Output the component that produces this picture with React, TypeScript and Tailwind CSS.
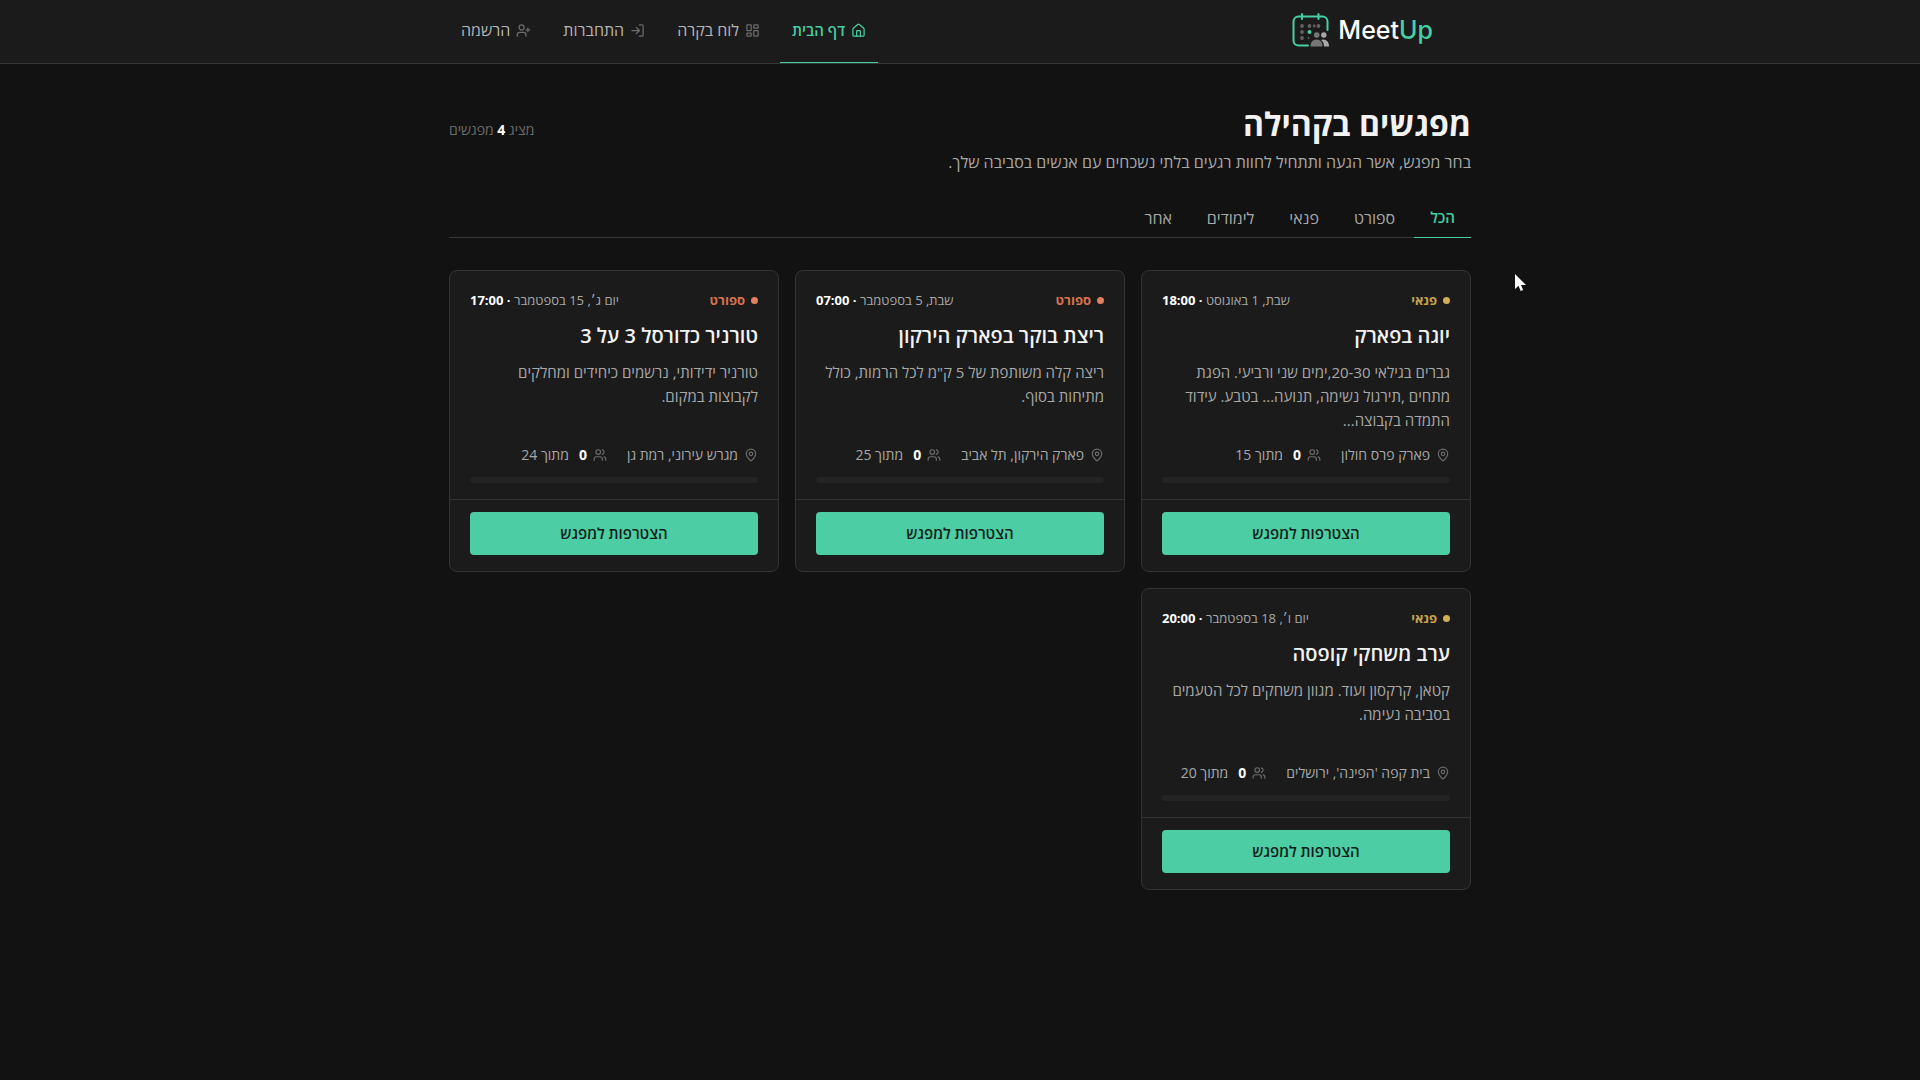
import { House, LayoutDashboard, LogIn, MapPin, UserPlus, Users } from "lucide-react";
import { clsx } from "clsx";

interface Meetup {
  id: number;
  category: "פנאי" | "ספורט";
  date: string;
  time: string;
  title: string;
  description: string;
  location: string;
  capacity: number;
  joined: number;
}

const meetups: Meetup[] = [
  {
    id: 1,
    category: "פנאי",
    date: "שבת, 1 באוגוסט",
    time: "18:00",
    title: "יוגה בפארק",
    description:
      "גברים בגילאי 20-30,ימים שני ורביעי. הפגת מתחים ,תירגול נשימה, תנועה... בטבע. עידוד התמדה בקבוצה...",
    location: "פארק פרס חולון",
    capacity: 15,
    joined: 0,
  },
  {
    id: 2,
    category: "ספורט",
    date: "שבת, 5 בספטמבר",
    time: "07:00",
    title: "ריצת בוקר בפארק הירקון",
    description: 'ריצה קלה משותפת של 5 ק"מ לכל הרמות, כולל מתיחות בסוף.',
    location: "פארק הירקון, תל אביב",
    capacity: 25,
    joined: 0,
  },
  {
    id: 3,
    category: "ספורט",
    date: "יום ג׳, 15 בספטמבר",
    time: "17:00",
    title: "טורניר כדורסל 3 על 3",
    description: "טורניר ידידותי, נרשמים כיחידים ומחלקים לקבוצות במקום.",
    location: "מגרש עירוני, רמת גן",
    capacity: 24,
    joined: 0,
  },
  {
    id: 4,
    category: "פנאי",
    date: "יום ו׳, 18 בספטמבר",
    time: "20:00",
    title: "ערב משחקי קופסה",
    description: "קטאן, קרקסון ועוד. מגוון משחקים לכל הטעמים בסביבה נעימה.",
    location: "בית קפה 'הפינה', ירושלים",
    capacity: 20,
    joined: 0,
  },
];

const navItems = [
  { label: "דף הבית", icon: House, active: true },
  { label: "לוח בקרה", icon: LayoutDashboard, active: false },
  { label: "התחברות", icon: LogIn, active: false },
  { label: "הרשמה", icon: UserPlus, active: false },
];

const filters = ["הכל", "ספורט", "פנאי", "לימודים", "אחר"];

function Logo() {
  return (
    <a href="#" dir="ltr" className="flex items-center gap-1.5">
      <svg viewBox="0 0 40 36" className="h-9 w-10" fill="none" aria-hidden="true">
        <path
          d="M16 33.5H6.500a5 5 0 0 1-5-5V9.500a5 5 0 0 1 5-5h24a5 5 0 0 1 5 5v8.500"
          stroke="#45cfa4"
          strokeWidth="2"
          strokeLinecap="round"
        />
        <path d="M10 2v5M26.500 2v5" stroke="#45cfa4" strokeWidth="2" strokeLinecap="round" />
        <g fill="#626262">
          <circle cx="10" cy="14" r="1.900" />
          <circle cx="17.500" cy="14" r="1.900" />
          <circle cx="22.200" cy="14" r="1.400" />
          <circle cx="26.500" cy="14" r="1.900" />
          <circle cx="10" cy="20" r="1.900" />
          <circle cx="10" cy="26" r="1.900" />
          <circle cx="16.500" cy="26" r="0.900" />
        </g>
        <circle cx="17.500" cy="20" r="2" fill="#45cfa4" />
        <circle cx="31.800" cy="23" r="2.700" fill="#a8a8a8" />
        <path d="M31 27.500c4 0 6 3 6 7h-5c0-3-1-5-3-6.500z" fill="#a8a8a8" />
        <circle cx="24.700" cy="23" r="2.800" fill="#777" />
        <path d="M18.500 34.500c0-4 2-7 6-7s6 3 6 7z" fill="#777" />
      </svg>
      <span className="font-['Inter',sans-serif] text-[25px] leading-9 font-medium text-white">
        Meet<span className="text-[#45cfa4]">Up</span>
      </span>
    </a>
  );
}

function Header() {
  return (
    <header className="border-b border-[#363836] bg-[#1b1b1b]">
      <div className="mx-auto flex h-[63px] max-w-[1022px] items-stretch justify-between">
        <div className="flex items-center pr-[38px] pb-1">
          <Logo />
        </div>
        <nav className="flex gap-2">
          {navItems.map(({ label, icon: Icon, active }) => (
            <a
              key={label}
              href="#"
              className={clsx(
                "flex items-center gap-1.5 border-b px-3 pb-0.5",
                active
                  ? "border-[#45cfa4] text-[15px] font-semibold text-[#45cfa4]"
                  : "border-transparent text-base text-[#b4b4b4]"
              )}
            >
              <Icon
                className={clsx("size-[15px]", !active && "text-[#6c6c6c]")}
                strokeWidth={2}
              />
              {label}
            </a>
          ))}
        </nav>
      </div>
    </header>
  );
}

function MeetupCard({ meetup }: { meetup: Meetup }) {
  const isSport = meetup.category === "ספורט";

  return (
    <article className="flex flex-col rounded-lg border border-[#323432] bg-[#1b1b1b]">
      <div className="flex flex-1 flex-col px-5 pt-[19px] pb-4">
        <div className="flex items-center justify-between text-[13px] leading-5">
          <span
            className={clsx(
              "flex items-center gap-1.5 font-bold",
              isSport ? "text-[#d6734f]" : "text-[#c9a24a]"
            )}
          >
            <span
              className={clsx("size-[7px] rounded-full", isSport ? "bg-[#e0815f]" : "bg-[#d4ae55]")}
            />
            {meetup.category}
          </span>
          <span className="text-[#a8a8a8]">
            {meetup.date} <strong className="font-bold text-white">· {meetup.time}</strong>
          </span>
        </div>
        <h2 className="mt-3 text-xl leading-7 font-semibold text-[#f2f2f2]">{meetup.title}</h2>
        <p className="mt-2.5 min-h-18 text-[15px] leading-6 text-[#a8a8a8]">{meetup.description}</p>
        <div className="mt-[11px] flex items-center gap-5 text-sm leading-6 text-[#a8a8a8]">
          <span className="flex items-center gap-1.5">
            <MapPin className="size-[14px] text-[#6c6c6c]" />
            {meetup.location}
          </span>
          <span className="flex items-center gap-1.5">
            <Users className="size-[14px] text-[#6c6c6c]" />
            <strong className="font-bold text-white">{meetup.joined}</strong>
            <span className="ms-1">מתוך {meetup.capacity}</span>
          </span>
        </div>
        <div className="mt-2.5 h-[6px] overflow-hidden rounded-full bg-[#242424]">
          <div
            className="h-full bg-[#45cfa4]"
            style={{ width: `${(meetup.joined / meetup.capacity) * 100}%` }}
          />
        </div>
      </div>
      <div className="border-t border-[#323432] px-5 pt-3 pb-4">
        <button
          type="button"
          className="h-[43px] w-full rounded bg-[#4ccda4] text-[15px] font-semibold text-[#101c17]"
        >
          הצטרפות למפגש
        </button>
      </div>
    </article>
  );
}

function Pointer() {
  return (
    <svg
      viewBox="0 0 11 17"
      className="pointer-events-none absolute top-[210px] -right-[55px] h-[17px] w-[11px]"
      aria-hidden="true"
    >
      <path d="M0 0v15l3.500-3.300L5.700 17l2.500-1.100L6 11h5z" fill="#fff" />
    </svg>
  );
}

export default function App() {
  return (
    <div
      dir="rtl"
      className="min-h-screen overflow-x-hidden bg-[#121212] font-['Open_Sans','Liberation_Sans',sans-serif]"
    >
      <Header />
      <main className="relative mx-auto max-w-[1022px] pt-10 pb-16">
        <div className="flex items-start justify-between">
          <div>
            <h1 className="text-[32px] leading-10 font-bold text-[#f2f2f2]">מפגשים בקהילה</h1>
            <p className="mt-1.5 text-base leading-6 text-[#a8a8a8]">
              בחר מפגש, אשר הגעה ותתחיל לחוות רגעים בלתי נשכחים עם אנשים בסביבה שלך.
            </p>
          </div>
          <p className="mt-4 text-sm leading-5 text-[#6c6c6c]">
            מציג <strong className="font-bold text-white">{meetups.length}</strong> מפגשים
          </p>
        </div>
        <div className="mt-6 flex gap-[3px] border-b border-[#363836]">
          {filters.map((filter, i) => (
            <button
              key={filter}
              type="button"
              className={clsx(
                "-mb-px h-10 border-b px-4",
                i === 0
                  ? "border-[#45cfa4] text-[15px] font-semibold text-[#45cfa4]"
                  : "border-transparent text-base text-[#a8a8a8]"
              )}
            >
              {filter}
            </button>
          ))}
        </div>
        <div className="mt-8 grid grid-cols-1 gap-4 md:grid-cols-3">
          {meetups.map((meetup) => (
            <MeetupCard key={meetup.id} meetup={meetup} />
          ))}
        </div>
        <Pointer />
      </main>
    </div>
  );
}
